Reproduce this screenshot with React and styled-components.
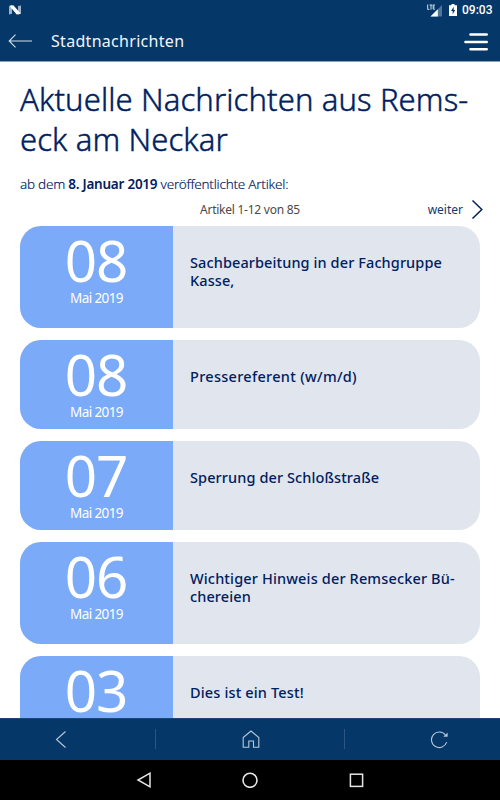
import React from 'react';
import styled, { createGlobalStyle } from 'styled-components';

const GlobalStyle = createGlobalStyle`
	* {
		box-sizing: border-box;
	}
	body {
		margin: 0;
		background: #ffffff;
		font-family: 'Noto Sans', 'Open Sans', sans-serif;
		overflow: hidden;
	}
	svg {
		display: block;
	}
`;

// the whole tablet screen
const Screen = styled.div`
	display: flex;
	flex-direction: column;
	width: 500px;
	height: 800px;
	overflow: hidden;
`;

// android status bar
const StatusBar = styled.div`
	display: flex;
	justify-content: space-between;
	align-items: center;
	height: 20px;
	padding: 0 7px 0 9px;
	background: #053868;
	color: #ffffff;
`;

const StatusIcons = styled.div`
	display: flex;
	align-items: center;
`;

const Clock = styled.span`
	width: 31px;
	margin-left: 5px;
	font-family: Roboto, sans-serif;
	font-size: 12px;
	font-weight: 500;
	line-height: 20px;
	white-space: nowrap;
`;

const Header = styled.header`
	display: flex;
	align-items: center;
	height: 42px;
	padding: 0 11px 0 8px;
	background: #053868;
	border-bottom: 1px solid #8a9fba;
`;

const HeaderTitle = styled.div`
	flex: 1;
	margin-left: 18px;
	color: #f2f5f9;
	font-size: 16px;
	line-height: 42px;
	letter-spacing: 0.3px;
`;

// scrolling page between the header and the toolbar
const Content = styled.main`
	flex: 1;
	min-height: 0;
	overflow: hidden;
	padding: 17px 20px 0;
	color: #00205f;
`;

const Heading = styled.h1`
	margin: 0;
	font-size: 31px;
	font-weight: 300;
	line-height: 40px;
	white-space: nowrap;
	-webkit-text-stroke: 0.45px #00205f;
`;

const HeadingLine = styled.span`
	display: block;
	letter-spacing: ${({ $spacing }) => $spacing};
`;

const Intro = styled.p`
	margin: 15px 0 0;
	font-size: 13.5px;
	font-weight: 300;
	line-height: 20px;
	letter-spacing: -0.24px;
	white-space: nowrap;
	-webkit-text-stroke: 0.15px #00205f;

	b {
		font-weight: 600;
		-webkit-text-stroke: 0;
	}
`;

const Pager = styled.div`
	display: grid;
	grid-template-columns: 1fr auto 1fr;
	align-items: center;
	height: 30px;
`;

const PagerInfo = styled.span`
	grid-column: 2;
	color: #4a4a4a;
	font-size: 12px;
	letter-spacing: -0.25px;
`;

const PagerNext = styled.span`
	display: flex;
	justify-content: flex-end;
	align-items: center;
	gap: 8px;
	margin-right: -4px;
	color: #123a6c;
	font-size: 12px;
`;

const NewsList = styled.div`
	display: flex;
	flex-direction: column;
	gap: 12.5px;
	margin-top: 2px;
`;

const NewsCard = styled.article`
	display: flex;
	flex-shrink: 0;
	height: ${({ $tall }) => ($tall ? '101.5px' : '88.5px')};
	border-radius: 21px;
	overflow: hidden;
	background: #e1e6ee;
`;

const DateBox = styled.div`
	width: 153px;
	padding-top: 5px;
	background: #7babf8;
	color: #ffffff;
	text-align: center;
`;

const Day = styled.div`
	font-size: 56.5px;
	font-weight: 400;
	line-height: 60px;
	letter-spacing: -1px;
	text-indent: -1px;
`;

const Month = styled.div`
	font-size: 13.5px;
	line-height: 14px;
	letter-spacing: -0.6px;
`;

const NewsTitle = styled.h2`
	margin: 0;
	padding: 28px 0 0 17px;
	font-size: 14.5px;
	font-weight: 500;
	line-height: 17.5px;
	white-space: nowrap;
`;

const TitleLine = styled.span`
	display: block;
	letter-spacing: ${({ $spacing }) => $spacing || '0'};
`;

// app toolbar: back, home, reload
const Toolbar = styled.nav`
	display: grid;
	grid-template-columns: 155px 1px 188px 1px 1fr;
	align-items: center;
	height: 42px;
	background: #053868;
	border-top: 1px solid #1c4675;
`;

const ToolbarItem = styled.div`
	padding-left: ${({ $offset }) => $offset}px;
`;

const Divider = styled.div`
	height: 20px;
	margin-top: -2px;
	background: #2b5684;
`;

const AndroidNav = styled.nav`
	display: flex;
	justify-content: center;
	align-items: center;
	gap: 90px;
	height: 40px;
	background: #000000;
`;

const news = [
	{
		day: '08',
		tall: true,
		lines: [
			{ text: 'Sachbearbeitung in der Fachgruppe', spacing: '0.1px' },
			{ text: 'Kasse,', spacing: '0.1px' },
		],
	},
	{ day: '08', lines: [{ text: 'Pressereferent (w/m/d)', spacing: '0.3px' }] },
	{ day: '07', lines: [{ text: 'Sperrung der Schloßstraße', spacing: '0.1px' }] },
	{
		day: '06',
		tall: true,
		lines: [
			{ text: 'Wichtiger Hinweis der Remsecker Bü-', spacing: '0.15px' },
			{ text: 'chereien', spacing: '0.1px' },
		],
	},
	{ day: '03', lines: [{ text: 'Dies ist ein Test!', spacing: '0.15px' }] },
];

const AndroidN = () => (
	<svg width="12" height="10" viewBox="0 0 12 10">
		<path d="M0 1.5L3 0.3V8.7L0 9.5ZM9 1L12 0.5V8.5L9 9.7Z" fill="#9db2c8" />
		<path d="M0.3 0.8L4.3 0.3L11.8 8.8L7.7 9.6Z" fill="#ffffff" />
	</svg>
);

const SignalIcon = () => (
	<svg width="16" height="14" viewBox="0 0 16 14">
		<path d="M15 2V13.5H3.5Z" fill="#4f7598" />
		<path d="M10.8 6.2V13.5H3.5Z" fill="#ffffff" />
		<path
			d="M0.7 1.5V6.4H2.4M2.6 2H5.4M4 2V6.6M8 2H6.2V6.1H8M6.2 4H7.7"
			fill="none"
			stroke="#d5dfe9"
			strokeWidth="1"
		/>
	</svg>
);

const BatteryIcon = () => (
	<svg width="8" height="12" viewBox="0 0 8 12">
		<path d="M2.5 0H5.5V1.2H8V12H0V1.2H2.5Z" fill="#ffffff" />
		<path d="M4.7 2.8L2 7H3.7V10.2L6.2 5.9H4.7Z" fill="#053868" />
	</svg>
);

const BackArrow = () => (
	<svg width="25" height="14" viewBox="0 0 25 14" fill="none" stroke="#d3dde8">
		<path d="M7.5 0.7L1.2 7L7.5 13.3M1.2 7H24" strokeWidth="1.1" />
	</svg>
);

const MenuIcon = () => (
	<svg width="25" height="20" viewBox="0 0 25 20" stroke="#ffffff">
		<path
			d="M6.5 3.5H22.7M1.5 11H22.7M6.5 18.3H22.7"
			strokeWidth="2.6"
			strokeLinecap="round"
		/>
	</svg>
);

const App = () => {
	return (
		<>
			<GlobalStyle />
			<Screen>
				<StatusBar>
					<AndroidN />
					<StatusIcons>
						<SignalIcon />
						<svg width="6" height="1" />
						<BatteryIcon />
						<Clock>09:03</Clock>
					</StatusIcons>
				</StatusBar>
				<Header>
					<BackArrow />
					<HeaderTitle>Stadtnachrichten</HeaderTitle>
					<MenuIcon />
				</Header>
				<Content>
					<Heading>
						<HeadingLine $spacing="0.12px">Aktuelle Nachrichten aus Rems-</HeadingLine>
						<HeadingLine $spacing="0.12px">eck am Neckar</HeadingLine>
					</Heading>
					<Intro>
						ab dem <b>8. Januar 2019</b> veröffentlichte Artikel:
					</Intro>
					<Pager>
						<PagerInfo>Artikel 1-12 von 85</PagerInfo>
						<PagerNext>
							weiter
							<svg width="13" height="20" viewBox="0 0 13 20" fill="none">
								<path d="M1.5 1.5L10.8 10.5L1.5 19.5" stroke="#00205f" strokeWidth="1.5" />
							</svg>
						</PagerNext>
					</Pager>
					<NewsList>
						{news.map((item, index) => (
							<NewsCard key={index} $tall={item.tall}>
								<DateBox>
									<Day>{item.day}</Day>
									<Month>Mai 2019</Month>
								</DateBox>
								<NewsTitle>
									{item.lines.map((line) => (
										<TitleLine key={line.text} $spacing={line.spacing}>
											{line.text}
										</TitleLine>
									))}
								</NewsTitle>
							</NewsCard>
						))}
					</NewsList>
				</Content>
				<Toolbar>
					<ToolbarItem $offset={55}>
						<svg width="12" height="18" viewBox="0 0 12 18" fill="none">
							<path d="M10.5 0.5L1.5 8.5L10.5 16.5" stroke="#b9c8d8" strokeWidth="1.1" />
						</svg>
					</ToolbarItem>
					<Divider />
					<ToolbarItem $offset={86}>
						<svg width="18" height="19" viewBox="0 0 18 19" fill="none">
							<path
								d="M1.2 7.5L9 1L16.8 7.5V17.3H11.5V11H6.8V17.3H1.2Z"
								stroke="#b9c8d8"
								strokeWidth="1.1"
							/>
						</svg>
					</ToolbarItem>
					<Divider />
					<ToolbarItem $offset={85}>
						<svg width="19" height="18" viewBox="0 0 19 18" fill="none" stroke="#b9c8d8">
							<path d="M16.7 11.2A7.8 7.8 0 1 1 15.6 4.2" strokeWidth="1.1" />
							<path d="M17.4 2.2V5.4H13.8Z" fill="#b9c8d8" strokeWidth="0.5" />
						</svg>
					</ToolbarItem>
				</Toolbar>
				<AndroidNav>
					<svg width="16" height="16" viewBox="0 0 16 16" fill="none">
						<path d="M14 1.2V14.8L2 8Z" stroke="#e6e6e6" strokeWidth="1.5" />
					</svg>
					<svg width="16" height="16" viewBox="0 0 16 16" fill="none">
						<circle cx="8" cy="8.3" r="7" stroke="#e6e6e6" strokeWidth="1.6" />
					</svg>
					<svg width="16" height="16" viewBox="0 0 16 16" fill="none">
						<rect x="2.4" y="2.2" width="12.2" height="12.2" stroke="#e6e6e6" strokeWidth="1.5" />
					</svg>
				</AndroidNav>
			</Screen>
		</>
	);
};

export default App;
